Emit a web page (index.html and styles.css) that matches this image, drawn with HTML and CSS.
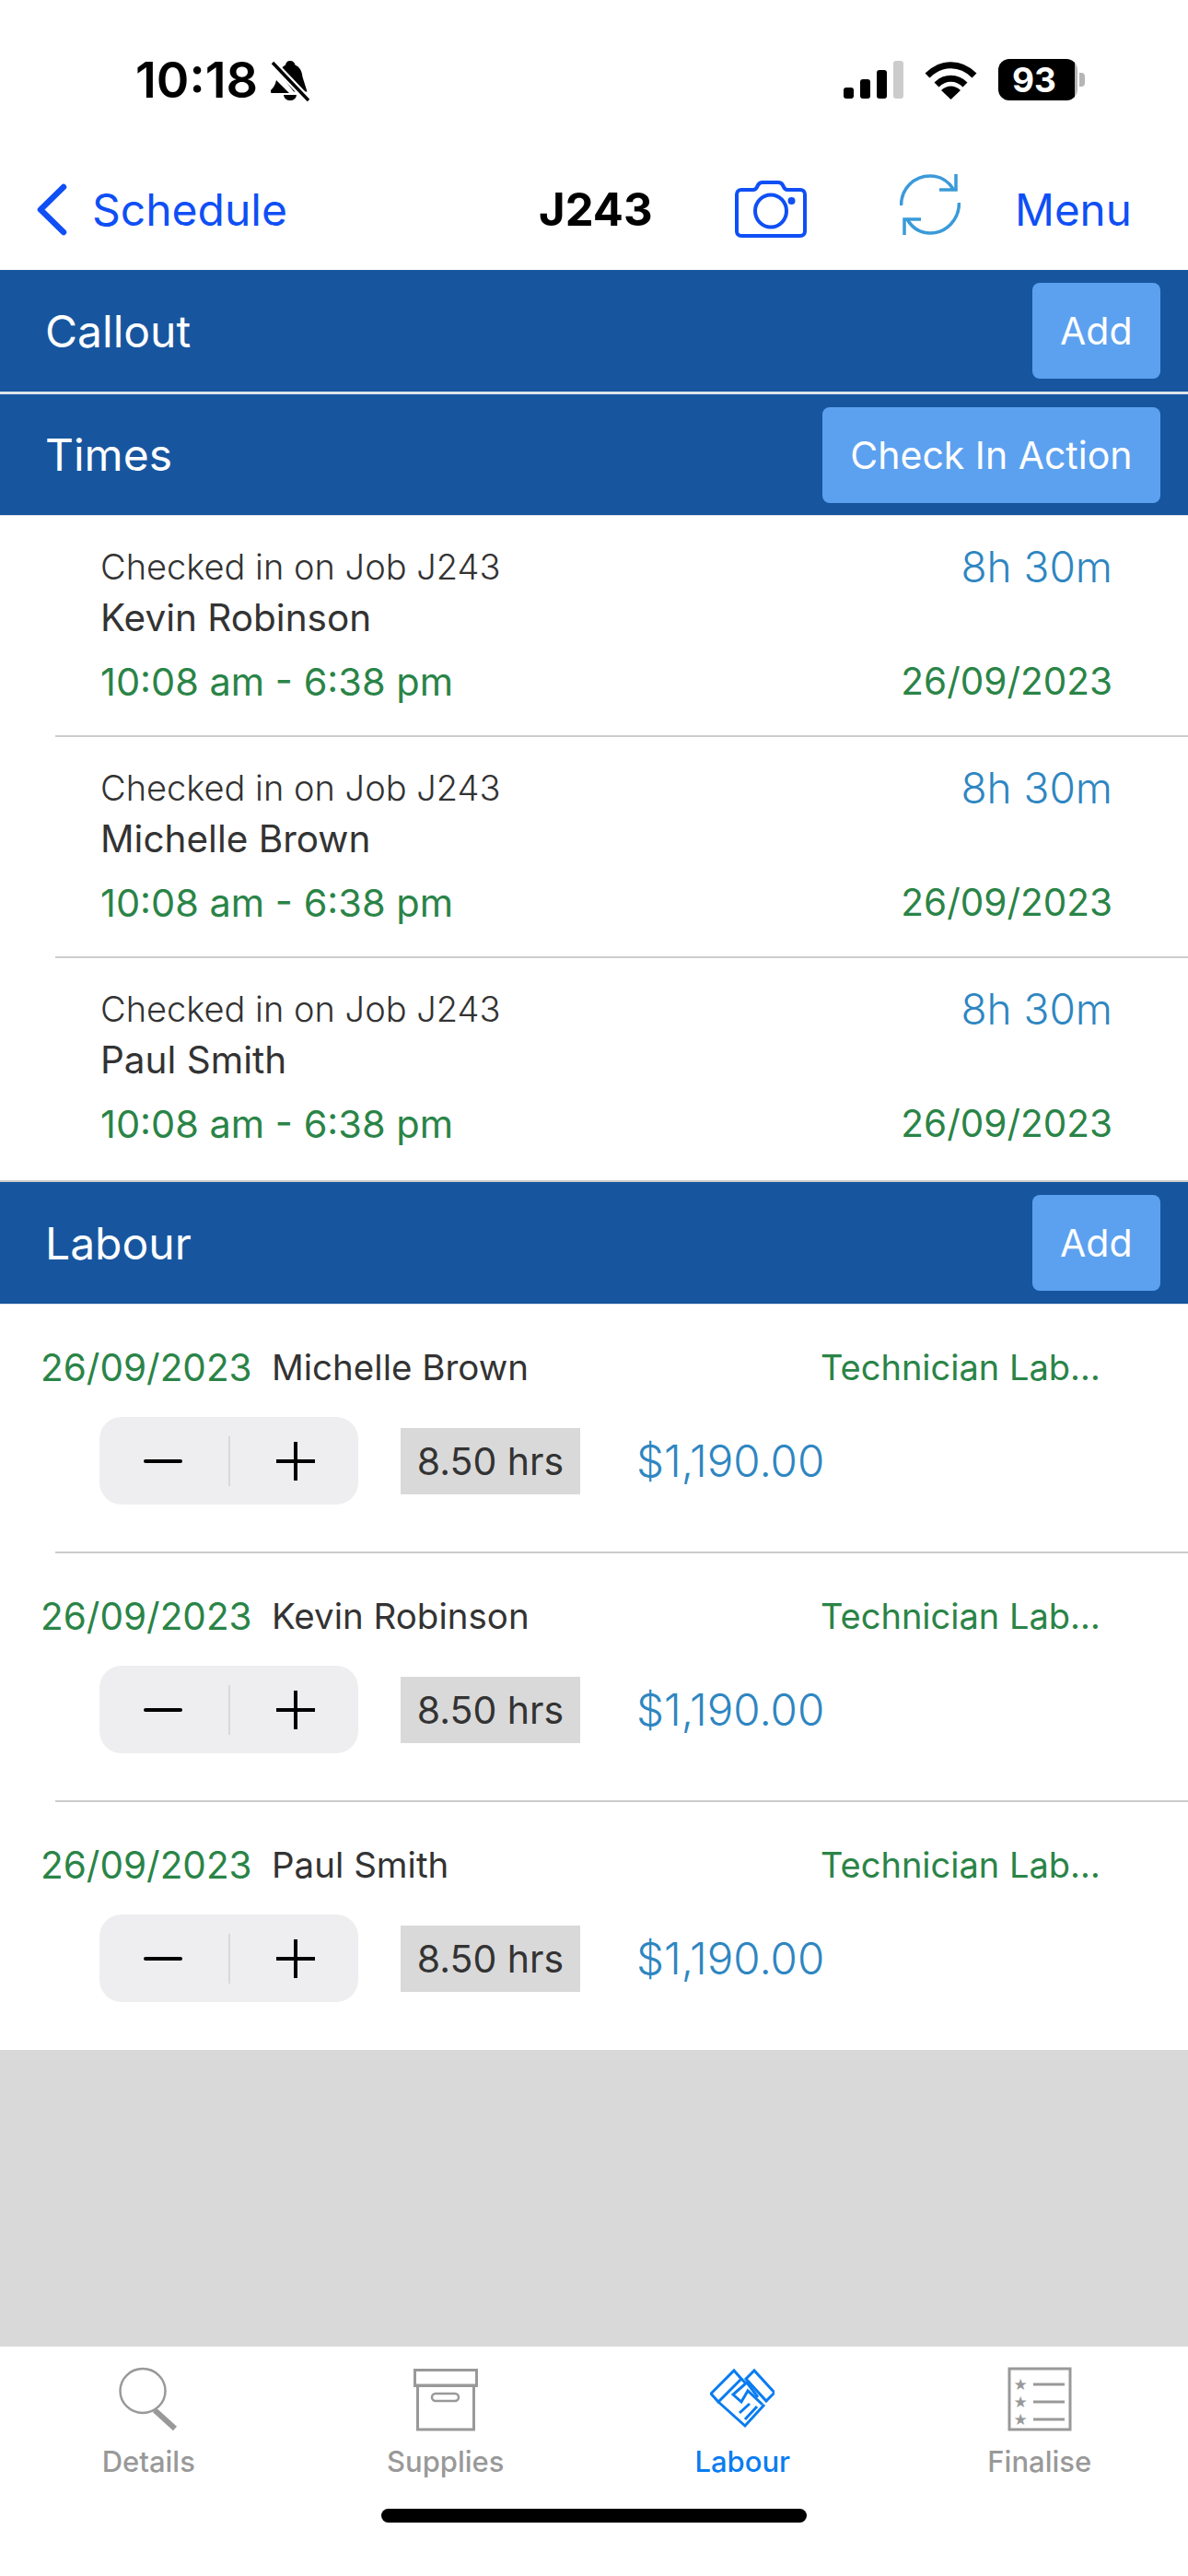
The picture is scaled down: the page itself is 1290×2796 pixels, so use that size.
FILE: index.html
```html
<!DOCTYPE html>
<html>
<head>
    <title>J243 Labour</title>
    <link rel="stylesheet" href="styles.css">
</head>
<body>
    <div class="status-bar">
        <div class="status-left">
            <span class="clock">10:18</span>
            <svg class="bell" viewBox="0 0 42 45" width="42" height="45">
                <path d="M21 1c3 0 5 2 5.500 4.500 5 2 7.500 7 8 13l5 16H25L9 14c1.500-4 4-7 7-8.500C16.500 3 18 1 21 1z" fill="#000"/>
                <path d="M6 22 20 36H1c-1 0-1.500-1.500-1-3 3-3 5-6 6-11z" fill="#000"/>
                <path d="M14 38h14c-.5 4-3.500 6-7 6s-6.500-2-7-6z" fill="#000"/>
                <path d="M1 2 41 44" stroke="#fff" stroke-width="8"/>
                <path d="M2 3 41 44" stroke="#000" stroke-width="3.500"/>
            </svg>
        </div>
        <div class="status-right">
            <svg class="signal" viewBox="0 0 65 41" width="65" height="41">
                <rect x="0" y="29" width="11" height="12" rx="3" fill="#000"/>
                <rect x="18" y="20" width="11" height="21" rx="3" fill="#000"/>
                <rect x="36" y="10" width="11" height="31" rx="3" fill="#000"/>
                <rect x="54" y="0" width="11" height="41" rx="3" fill="#ccc"/>
            </svg>
            <svg class="wifi" viewBox="0 0 57 42" width="57" height="42">
                <path d="M3 16C18 1 39 1 54 16" fill="none" stroke="#000" stroke-width="7"/>
                <path d="M13 26C22 17 35 17 44 26" fill="none" stroke="#000" stroke-width="7"/>
                <path d="M18 32C24 26 33 26 39 32L28.500 42z" fill="#000"/>
            </svg>
            <div class="battery"><span>93</span></div>
            <div class="battery-cap"></div>
        </div>
    </div>

    <div class="nav-bar">
        <div class="nav-back">
            <svg class="chevron" viewBox="0 0 33 57" width="33" height="57">
                <path d="M29 4 4 28.500 29 53" fill="none" stroke="#0f4ff5" stroke-width="6.500" stroke-linecap="round" stroke-linejoin="round"/>
            </svg>
            <span>Schedule</span>
        </div>
        <div class="nav-title">J243</div>
        <svg class="camera" viewBox="0 0 78 62" width="78" height="62">
            <path d="M7 10h13c2 0 3-1 4-3l1-2c1-2 3-3 5-3h17c2 0 4 1 5 3l1 2c1 2 2 3 4 3h14c3 0 5 2 5 5v40c0 3-2 5-5 5H7c-3 0-5-2-5-5V15c0-3 2-5 5-5z" fill="none" stroke="#0f4ff5" stroke-width="4"/>
            <ellipse cx="39" cy="33" rx="17" ry="17.500" fill="none" stroke="#0f4ff5" stroke-width="4"/>
            <circle cx="61.500" cy="22" r="4" fill="#0f4ff5"/>
        </svg>
        <svg class="refresh" viewBox="0 0 66 68" width="66" height="68">
            <path d="M1.500 35C1.500 17 15 3 33 3c10 0 19 5 25 14" fill="none" stroke="#3a9ad9" stroke-width="3.500"/>
            <path d="M61 1v17H43" fill="none" stroke="#3a9ad9" stroke-width="3.500"/>
            <path d="M64.500 32C64.500 50 51 65 33 65c-10 0-19-5-25-15" fill="none" stroke="#3a9ad9" stroke-width="3.500"/>
            <path d="M5 67V50h18" fill="none" stroke="#3a9ad9" stroke-width="3.500"/>
        </svg>
        <div class="nav-menu">Menu</div>
    </div>

    <div class="band band-callout">
        <span>Callout</span>
        <button class="band-btn">Add</button>
    </div>
    <div class="band band-times">
        <span>Times</span>
        <button class="band-btn">Check In Action</button>
    </div>

    <div class="time-row">
        <div class="time-top">
            <div>
                <div class="time-note">Checked in on Job J243</div>
                <div class="time-name">Kevin Robinson</div>
            </div>
            <div class="time-total">8h 30m</div>
        </div>
        <div class="time-bottom"><span>10:08 am - 6:38 pm</span><span class="time-date">26/09/2023</span></div>
    </div>
    <div class="time-row">
        <div class="time-top">
            <div>
                <div class="time-note">Checked in on Job J243</div>
                <div class="time-name">Michelle Brown</div>
            </div>
            <div class="time-total">8h 30m</div>
        </div>
        <div class="time-bottom"><span>10:08 am - 6:38 pm</span><span class="time-date">26/09/2023</span></div>
    </div>
    <div class="time-row time-row-last">
        <div class="time-top">
            <div>
                <div class="time-note">Checked in on Job J243</div>
                <div class="time-name">Paul Smith</div>
            </div>
            <div class="time-total">8h 30m</div>
        </div>
        <div class="time-bottom"><span>10:08 am - 6:38 pm</span><span class="time-date">26/09/2023</span></div>
    </div>

    <div class="band">
        <span>Labour</span>
        <button class="band-btn">Add</button>
    </div>

    <div class="labour-row">
        <div class="labour-top">
            <span class="labour-date">26/09/2023</span>
            <span class="labour-name">Michelle Brown</span>
            <span class="labour-type">Technician Lab…</span>
        </div>
        <div class="labour-bottom">
            <div class="stepper"><span class="step-minus"></span><span class="step-line"></span><span class="step-plus"></span></div>
            <div class="hours">8.50 hrs</div>
            <div class="amount">$1,190.00</div>
        </div>
    </div>
    <div class="labour-row">
        <div class="labour-top">
            <span class="labour-date">26/09/2023</span>
            <span class="labour-name">Kevin Robinson</span>
            <span class="labour-type">Technician Lab…</span>
        </div>
        <div class="labour-bottom">
            <div class="stepper"><span class="step-minus"></span><span class="step-line"></span><span class="step-plus"></span></div>
            <div class="hours">8.50 hrs</div>
            <div class="amount">$1,190.00</div>
        </div>
    </div>
    <div class="labour-row labour-row-last">
        <div class="labour-top">
            <span class="labour-date">26/09/2023</span>
            <span class="labour-name">Paul Smith</span>
            <span class="labour-type">Technician Lab…</span>
        </div>
        <div class="labour-bottom">
            <div class="stepper"><span class="step-minus"></span><span class="step-line"></span><span class="step-plus"></span></div>
            <div class="hours">8.50 hrs</div>
            <div class="amount">$1,190.00</div>
        </div>
    </div>

    <div class="filler"></div>

    <div class="tab-bar">
        <div class="tab">
            <svg viewBox="0 0 70 70" width="70" height="70">
                <ellipse cx="29" cy="26" rx="24.500" ry="24" fill="none" stroke="#999" stroke-width="2.500"/>
                <path d="M42 47 64 67" stroke="#999" stroke-width="6"/>
            </svg>
            <span>Details</span>
        </div>
        <div class="tab">
            <svg viewBox="0 0 70 70" width="70" height="70">
                <rect x="1.500" y="3.500" width="67" height="17" fill="none" stroke="#999" stroke-width="3"/>
                <rect x="4.500" y="20" width="61" height="48" fill="none" stroke="#999" stroke-width="3"/>
                <rect x="20" y="29" width="29" height="8" rx="4" fill="none" stroke="#999" stroke-width="2.500"/>
            </svg>
            <span>Supplies</span>
        </div>
        <div class="tab tab-active">
            <svg viewBox="0 0 70 70" width="70" height="70">
                <g fill="none" stroke="#0a7cf0" stroke-width="3">
                    <path d="M1 29 26 4 34 13 9 38z"/>
                    <path d="M39 13 48 4 70 28 61 37z"/>
                    <path d="M9 38 38 64 59 41"/>
                    <path d="M34 13 38 17 40 17 25 30 34 38 41 26 57 41"/>
                    <path d="M40 17 52 33"/>
                    <path d="M32 50 43 40M38 57 51 43"/>
                </g>
            </svg>
            <span>Labour</span>
        </div>
        <div class="tab">
            <svg viewBox="0 0 70 70" width="70" height="70">
                <rect x="2" y="2" width="66" height="66" fill="none" stroke="#999" stroke-width="3"/>
                <path d="M28 19H62M28 38H62M28 57H62" stroke="#999" stroke-width="3"/>
                <text class="tab-star" x="14" y="25">★</text>
                <text class="tab-star" x="14" y="44">★</text>
                <text class="tab-star" x="14" y="63">★</text>
            </svg>
            <span>Finalise</span>
        </div>
    </div>
    <div class="home-area">
        <div class="home-bar"></div>
    </div>
</body>
</html>
```

FILE: styles.css
```css
* {
    margin: 0;
    padding: 0;
    box-sizing: border-box;
}

body {
    width: 1290px;
    height: 2796px;
    font-family: 'Inter', 'Liberation Sans', sans-serif;
    background-color: #FFFFFF;
    color: #333333;
    display: flex;
    flex-direction: column;
    overflow: hidden;
}

/* status bar */
.status-bar {
    height: 175px;
    padding: 64px 112px 0 147px;
    display: flex;
    justify-content: space-between;
    align-items: flex-start;
}

.status-left {
    display: flex;
    align-items: center;
    gap: 14px;
}

.clock {
    width: 133px;
    font-size: 54px;
    line-height: 46px;
    font-weight: 600;
    color: #000000;
}

.status-right {
    display: flex;
    align-items: center;
}

.wifi {
    margin-left: 23px;
}

.battery {
    width: 86px;
    height: 45px;
    margin-left: 23px;
    border-radius: 12px;
    background: linear-gradient(to right, #000 0, #000 83px, #b5b5b5 83px);
    color: #FFFFFF;
    font-size: 37px;
    font-weight: 700;
    display: flex;
    align-items: center;
    padding-left: 15px;
}

.battery-cap {
    width: 6px;
    height: 15px;
    margin-left: 2px;
    border-radius: 0 4px 4px 0;
    background-color: #b5b5b5;
}

/* nav bar */
.nav-bar {
    height: 118px;
    padding: 0 0 14px 40px;
    display: flex;
    align-items: center;
}

.nav-back {
    display: flex;
    align-items: center;
    gap: 27px;
    width: 545px;
    font-size: 48px;
    color: #0f4ff5;
}

.nav-title {
    width: 213px;
    font-size: 49px;
    font-weight: 700;
    color: #000000;
}

.refresh {
    margin: -10px 0 0 101px;
}

.nav-menu {
    margin-left: 59px;
    font-size: 47.5px;
    color: #0f4ff5;
}

/* section bands */
.band {
    height: 133px;
    padding: 0 30px 0 49px;
    display: flex;
    justify-content: space-between;
    align-items: center;
    background-color: #17569f;
    border-bottom: 1px solid #dfe3ea;
    color: #FFFFFF;
    font-size: 48px;
}

.band-callout {
    height: 135px;
    border-bottom-width: 3px;
}

.band-times {
    height: 132px;
}

.band-btn {
    height: 104px;
    padding: 0 30.5px;
    border: none;
    border-radius: 8px;
    background-color: #5ca1f0;
    color: #FFFFFF;
    font-family: inherit;
    font-size: 41px;
}

/* times list */
.time-row {
    height: 240px;
    margin-left: 60px;
    padding: 30px 82px 0 49px;
    border-bottom: 2px solid #cccccc;
}

.time-row-last {
    height: 243px;
    margin-left: 0;
    padding-left: 109px;
}

.time-top {
    display: flex;
    justify-content: space-between;
}

.time-note {
    font-size: 38px;
    line-height: 51px;
    font-weight: 300;
}

.time-name {
    font-size: 40.5px;
    line-height: 60px;
}

.time-total {
    font-size: 46px;
    line-height: 50px;
    font-weight: 300;
    color: #2e86c1;
}

.time-bottom {
    margin-top: 12px;
    display: flex;
    justify-content: space-between;
    align-items: center;
    font-size: 41.5px;
    line-height: 54px;
    color: #2a8447;
}

.time-date {
    font-size: 40.5px;
}

/* labour list */
.labour-row {
    height: 270px;
    padding: 41px 0 0 44px;
    position: relative;
}

.labour-row::after {
    content: "";
    position: absolute;
    left: 60px;
    right: 0;
    bottom: 0;
    height: 2px;
    background-color: #cccccc;
}

.labour-row-last {
    height: 269px;
}

.labour-row-last::after {
    display: none;
}

.labour-top {
    display: flex;
    align-items: center;
    height: 54px;
}

.labour-date {
    width: 251px;
    font-size: 40.5px;
    color: #2a8447;
}

.labour-name {
    width: 596px;
    font-size: 38.5px;
}

.labour-type {
    font-size: 38px;
    color: #2a8447;
}

.labour-bottom {
    margin: 27px 0 0 64px;
    display: flex;
    align-items: center;
}

.stepper {
    width: 281px;
    height: 95px;
    border-radius: 24px;
    background-color: #eeeef0;
    display: flex;
    align-items: center;
    justify-content: center;
}

.step-minus {
    width: 42px;
    height: 4px;
    border-radius: 2px;
    background-color: #000000;
}

.step-line {
    width: 2px;
    height: 54px;
    margin: 0 50px;
    background-color: #d8d8da;
}

.step-plus {
    width: 42px;
    height: 42px;
    background:
        linear-gradient(#000, #000) center / 42px 4px no-repeat,
        linear-gradient(#000, #000) center / 4px 42px no-repeat;
}

.hours {
    width: 195px;
    height: 72px;
    margin-left: 46px;
    background-color: #d9d9d9;
    font-size: 41px;
    display: flex;
    align-items: center;
    justify-content: center;
}

.amount {
    margin-left: 61px;
    font-size: 47.5px;
    font-weight: 300;
    color: #2e86c1;
}

/* filler and tabs */
.filler {
    flex: 1;
    background-color: #d9d9d9;
}

.tab-bar {
    height: 168px;
    padding-top: 22px;
    display: grid;
    grid-template-columns: repeat(4, 1fr);
}

.tab {
    display: flex;
    flex-direction: column;
    align-items: center;
    gap: 14px;
    font-size: 31px;
    font-weight: 500;
    color: #999999;
}

.tab-active {
    color: #0a7cf0;
}

.tab-star {
    font-family: 'DejaVu Sans', sans-serif;
    font-size: 17px;
    fill: #999999;
    text-anchor: middle;
}

.home-area {
    height: 81px;
    padding-top: 8px;
    display: flex;
    justify-content: center;
}

.home-bar {
    width: 462px;
    height: 15px;
    border-radius: 8px;
    background-color: #000000;
}
```
